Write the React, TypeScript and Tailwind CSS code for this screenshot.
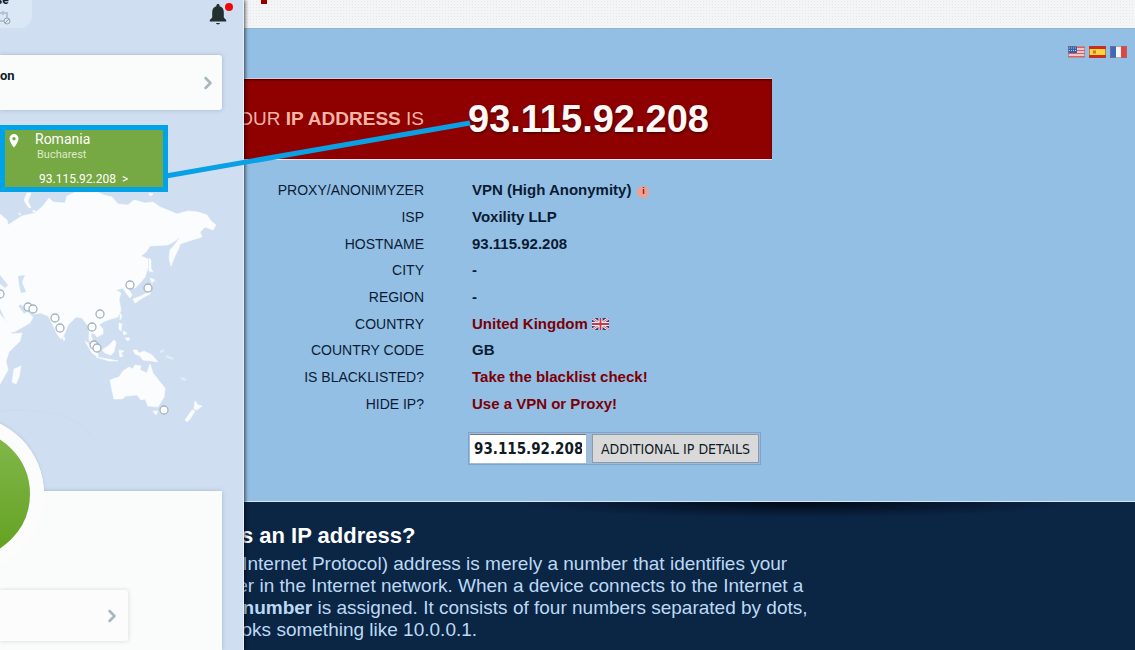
import type { ReactNode } from 'react';
import { ChevronRight } from 'lucide-react';

const PINS = [
  [130, 285],
  [148, 288],
  [0, 294],
  [28, 307],
  [33, 309],
  [55, 318],
  [60, 328],
  [100, 314],
  [92, 327],
  [94, 345],
  [97, 348],
  [164, 410],
];

function FlagUS() {
  return (
    <svg viewBox="0 0 17 12" className="h-3 w-[17px]" role="img" aria-label="English">
      <rect width="17" height="12" fill="#f4e9ea" />
      <path d="M0 1.5h17M0 4.5h17M0 7.5h17M0 10.5h17" stroke="#d9625f" strokeWidth="1.3" />
      <rect width="9" height="7" fill="#2f5fae" />
      <path d="M1 2h7M1 4.500h7" stroke="#b9cdec" strokeDasharray="1 1" />
      <rect x=".5" y=".5" width="16" height="11" fill="none" stroke="#8f6f84" strokeOpacity=".6" />
    </svg>
  );
}

function FlagES() {
  return (
    <svg viewBox="0 0 17 12" className="h-3 w-[17px]" role="img" aria-label="Español">
      <rect width="17" height="12" fill="#d3281f" />
      <rect y="3" width="17" height="6" fill="#fbd63a" />
      <rect x="4" y="4.500" width="3" height="3" fill="#c9783a" />
      <rect x=".5" y=".5" width="16" height="11" fill="none" stroke="#a8402f" strokeOpacity=".6" />
    </svg>
  );
}

function FlagFR() {
  return (
    <svg viewBox="0 0 17 12" className="h-3 w-[17px]" role="img" aria-label="Français">
      <rect width="17" height="12" fill="#f7f7f7" />
      <rect width="6" height="12" fill="#3f69b5" />
      <rect x="11" width="6" height="12" fill="#e2453f" />
      <rect x=".5" y=".5" width="16" height="11" fill="none" stroke="#8c7480" strokeOpacity=".6" />
    </svg>
  );
}

function FlagGB() {
  return (
    <svg viewBox="0 0 17 12" className="ml-1 inline-block h-3 w-[17px] align-[-1px]" role="img" aria-label="GB">
      <rect width="17" height="12" fill="#2d4480" />
      <path d="M0 0l17 12M17 0L0 12" stroke="#f3e7ee" strokeWidth="2.600" />
      <path d="M0 0l17 12M17 0L0 12" stroke="#c8525f" strokeWidth=".8" />
      <path d="M8.500 0v12M0 6h17" stroke="#f6ecf0" strokeWidth="4" />
      <path d="M8.500 0v12M0 6h17" stroke="#c43a48" strokeWidth="1.800" />
    </svg>
  );
}

function WorldMap() {
  return (
    <svg viewBox="0 187 244 250" className="block h-[250px] w-[244px]" aria-hidden="true">
      <g fill="#fbfcfd" stroke="#fbfcfd" strokeWidth=".6" strokeLinejoin="round">
        <path d="M0 214L7 220 8 225 14 221 22 216 35 213 43 206 49 198 53 202 65 203 67 196 80 190 95 191 104 195 112 197 118 204 128 205 134 200 145 203 153 202 160 207 170 211 177 214 188 211 198 212 207 215 211 221 216 225 213 230 205 227 200 232 202 237 192 240 180 244 179 248 175 256 171 266 169 258 170 250 176 243 180 237 172 243 167 245 150 246 146 252 141 256 148 259 148 268 145 277 141 282 135 288 128 288 132 295 130 298 126 293 123 288 116 290 121 293 119 299 121 310 118 317 108 320 103 322 99 325 103 329 103 334 97 337 93 333 91 334 93 343 97 348 95 349 89 340 89 327 82 318 76 317 68 325 64 335 61 339 57 334 53 325 48 316 41 313 33 314 27 311 21 304 18 306 24 314 27 312 33 317 30 323 14 332 11 332 0 308z" />
        <path d="M0 314L5 320 12 334 22 333 20 341 9 352 6 361 8 370 0 384z" />
        <path d="M14 369L21 366 19 377 16 384 12 382z" />
        <path d="M110 380L119 377 123 371 129 367 133 369 135 365 141 366 140 370 147 373 150 364 153 373 160 382 165 388 164 397 158 407 148 406 145 399 141 400 137 395 126 396 122 399 114 399 112 390z" />
        <path d="M153 411L158 411 156 415zM195 401L198 405 202 406 197 410 194 409zM192 410L195 411 190 419 187 422 185 420z" />
        <path d="M133 350L137 350 139 353 144 351 152 355 158 362 152 361 143 360 140 356 135 354z" />
        <path d="M102 350L108 346 114 340 116 342 114 352 111 355 105 353zM85 341L92 346 98 353 98 357 92 353zM96 357L108 359 118 361 109 361z" />
        <path d="M119 350L124 351 121 353 123 356 120 357zM119 323L122 324 121 331 119 329zM123 331L127 333 124 335zM125 338L130 338 128 341zM120 313L122 316 120 320zM62 336L65 338 64 341z" />
        <path d="M149 258L151 260 151 269 153 272 149 271zM150 278L155 280 152 283zM152 284L150 294 144 297 141 299 135 303 133 299 141 296 147 293z" />
        <path d="M27 193L24 200 28 207 31 208 28 201 31 193zM37 212L33 212 33 210zM19 213L21 214 19 215zM149 193L153 194 150 196z" />
      </g>
      <g fill="#d0e0f2">
        <path d="M18 276L25 275 22 282 26 292 21 293 19 285z" />
        <path d="M0 275L8 285 5 288 0 284z" />
        <path d="M91 335L95 334 96 339 92 338z" />
      </g>
      <path d="M160 352l4-2M166 356l7 3M181 378l5 2" stroke="#e4edf7" strokeWidth="2" />
      {PINS.map(([x, y]) => (
        <circle key={`${x}-${y}`} cx={x} cy={y} r="4" fill="#fff" stroke="#a3b3bd" strokeWidth="1.300" />
      ))}
      <path d="M0 411C30 408 62 412 80 425q8 5 12 12" fill="none" stroke="#c8d9ea" strokeOpacity=".5" />
    </svg>
  );
}

function Bell() {
  return (
    <svg viewBox="0 0 18 22" className="h-[22px] w-[18px]" aria-hidden="true">
      <path
        d="M9 1c-1 0-1.600.7-1.600 1.600v.7C4.700 4 3.200 6.200 3.200 9v5.500L.8 17v1.600h16.400V17l-2.400-2.500V9c0-2.800-1.500-5-4.200-5.700v-.7C10.600 1.700 10 1 9 1zM7 20c.3 1 1 1.400 2 1.400s1.700-.4 2-1.400z"
        fill="#22302f"
      />
    </svg>
  );
}

function VpnPanel() {
  return (
    <aside className="absolute inset-y-0 left-0 z-10 flex w-[244px] flex-col overflow-hidden border-r border-[#e6f1fb] bg-[#cfdff1] font-[Roboto,sans-serif] shadow-[1px_0_4px_rgba(0,0,0,0.7)]">
      <header className="flex h-[55px] items-start justify-between pr-2">
        <div className="h-7 w-8 overflow-hidden rounded-br-xl bg-[#dae7f5] text-xs leading-none font-bold text-[#101c28]">
          <div className="-mt-1.5 -ml-1">se</div>
          <svg viewBox="0 0 12 16" className="mt-1 h-4 w-3" aria-hidden="true">
            <path d="M0 3h7v5M0 11h4M3 1v4" fill="none" stroke="#b3c5d5" strokeWidth="2" />
            <circle cx="7" cy="11" r="3" fill="#dae7f5" stroke="#93a5b4" />
            <path d="M5 13l4-4" stroke="#93a5b4" />
          </svg>
        </div>
        <button type="button" aria-label="Notifications" className="relative mt-[3px] pr-2">
          <Bell />
          <span className="absolute top-0 right-0.5 size-2 rounded-full bg-[#f00808]" />
        </button>
      </header>

      <button
        type="button"
        className="mr-[21px] flex h-[55px] shrink-0 items-center justify-between rounded-r-[3px] bg-[#fafbfb] pr-1 text-[13px] font-bold text-[#101c28] shadow-[0_0_4px_rgba(120,140,160,0.5)]"
      >
        <span className="pb-3.5">on</span>
        <ChevronRight className="size-5 text-[#a5b8bf]" strokeWidth={3} />
      </button>

      <div className="z-10 mt-[15px] flex h-[67px] w-[168px] shrink-0 border-[5px] border-[#00a2e8] bg-[#76a843] text-white">
        <svg viewBox="0 0 10 14" className="mt-1 ml-1 h-3.5 w-2.5" aria-hidden="true">
          <path d="M5 0a4.500 4.500 0 0 0-4.500 4.700C.5 8 5 13.500 5 13.500S9.500 8 9.500 4.700A4.500 4.500 0 0 0 5 0zm0 3a1.700 1.700 0 1 1 0 3.400A1.700 1.700 0 0 1 5 3z" fill="#fff" fillRule="evenodd" />
        </svg>
        <div className="ml-4 flex-1">
          <div className="mt-px text-sm leading-4">Romania</div>
          <div className="ml-0.5 text-[11px] leading-4 text-[#dcebc9]">Bucharest</div>
          <a href="#server" className="mt-2 ml-1 block text-xs leading-4 whitespace-pre">
            93.115.92.208&nbsp; &gt;
          </a>
        </div>
      </div>

      <div className="-mt-[5px] h-[304px] shrink-0">
        <WorldMap />
      </div>

      <div className="relative mr-[21px] min-h-[159px] flex-1 rounded-tr-[3px] bg-[#fafbfb] shadow-[0_0_4px_rgba(120,140,160,0.5)]">
        <div className="absolute -top-[75px] -left-[112px] size-[156px] rounded-full bg-[#fbfcfb] shadow-[0_-1px_3px_rgba(120,140,160,0.25)]" />
        <div className="absolute inset-x-0 top-0 h-24 bg-[#fafbfb]" />
        <button
          type="button"
          aria-label="Connection"
          className="absolute -top-[75px] -left-[112px] size-[156px] rounded-full border-[14px] border-[#fbfcfb] bg-linear-to-b from-[#83b94b] to-[#62a01d]"
        />
        <button
          type="button"
          aria-label="Details"
          className="mt-[99px] flex h-[51px] w-32 items-center justify-end rounded-r-[3px] bg-[#fbfcfb] pr-1.5 shadow-[0_0_4px_rgba(120,140,130,0.3)]"
        >
          <ChevronRight className="size-5 text-[#a5b8bf]" strokeWidth={3} />
        </button>
      </div>
    </aside>
  );
}

const link = 'text-[#7a0008]';

const rows: { label: string; value: ReactNode }[] = [
  {
    label: 'PROXY/ANONIMYZER',
    value: (
      <>
        VPN (High Anonymity)
        <span className="ml-1.5 inline-flex size-3 items-center justify-center rounded-full bg-[#f0a090] align-[1px] text-[9px] leading-none text-[#8b1010]">
          i
        </span>
      </>
    ),
  },
  { label: 'ISP', value: 'Voxility LLP' },
  { label: 'HOSTNAME', value: '93.115.92.208' },
  { label: 'CITY', value: '-' },
  { label: 'REGION', value: '-' },
  {
    label: 'COUNTRY',
    value: (
      <a href="#country" className={link}>
        United Kingdom
        <FlagGB />
      </a>
    ),
  },
  { label: 'COUNTRY CODE', value: 'GB' },
  { label: 'IS BLACKLISTED?', value: <a href="#blacklist" className={link}>Take the blacklist check!</a> },
  { label: 'HIDE IP?', value: <a href="#vpn" className={link}>Use a VPN or Proxy!</a> },
];

function IpPage() {
  return (
    <div className="flex min-h-screen flex-col">
      <header className="h-7 bg-[#f4f5f7] bg-[radial-gradient(#e6e7ea_1px,transparent_1px)] bg-size-[3px_3px] pl-[261px]">
        <div className="h-1 w-1.5 bg-[#8f0000]" />
      </header>

      <main className="relative border-t border-b border-t-[#8fb5d6] border-b-[#d8eaf8] bg-[#94bfe5] pt-[49px] pb-9">
        <nav className="absolute top-[17px] right-2 flex gap-1">
          <a href="#en"><FlagUS /></a>
          <a href="#es"><FlagES /></a>
          <a href="#fr"><FlagFR /></a>
        </nav>

        <h1 className="flex h-[82px] w-[772px] items-center border-y border-t-[#e9c6cc] border-b-[#f6e4e8] bg-[#8f0000] font-normal shadow-[inset_0_1px_2px_rgba(0,0,0,0.6)]">
          <span className="w-[424px] text-right text-[19px] text-[#f5b5a6]">
            YOUR <b>IP ADDRESS</b> IS
          </span>
          <b className="pl-11 text-[38px] text-[#fff8f6] [text-shadow:1px_1px_3px_#300]">93.115.92.208</b>
        </h1>

        <table className="mt-[17px] h-60 text-[15px] leading-5 text-[#0a1c33]">
          <tbody>
            {rows.map(row => (
              <tr key={row.label}>
                <th scope="row" className="w-[424px] p-0 text-right text-sm font-normal">
                  {row.label}
                </th>
                <td className="p-0 pl-12 font-bold">{row.value}</td>
              </tr>
            ))}
          </tbody>
        </table>

        <form
          className="mt-[15px] ml-[468px] flex h-[33px] w-fit items-stretch gap-1.5 border border-[#7ea4cb] bg-[#9fbcdb] p-px font-['DejaVu_Sans_Condensed','DejaVu_Sans',sans-serif] text-[#111b26]"
          onSubmit={e => e.preventDefault()}
        >
          <input
            aria-label="IP address"
            defaultValue="93.115.92.208"
            className="w-[116px] border-t border-[#777] bg-white px-1 text-[15px] font-bold"
          />
          <button type="submit" className="border border-[#8f9aa8] bg-[#d9d9d9] px-2 text-sm">
            ADDITIONAL IP DETAILS
          </button>
        </form>
      </main>

      <section className="flex-1 bg-[#0b2545] bg-[radial-gradient(ellipse_at_top,#020a18,transparent_70%)] bg-size-[560px_16px] bg-position-[right_60px_top] bg-no-repeat pt-5 pl-[175px] text-[19px] leading-[22px] text-[#bcd9f4]">
        <h2 className="text-[22px] leading-7 font-bold text-white">What is an IP address?</h2>
        <p className="mt-[3px] whitespace-nowrap">
          The IP (Internet Protocol) address is merely a number that identifies your
          <br />
          computer in the Internet network. When a device connects to the Internet a
          <br />
          <b>unique number</b> is assigned. It consists of four numbers separated by dots,
          <br />
          and it looks something like 10.0.0.1.
        </p>
      </section>
    </div>
  );
}

export default function App() {
  return (
    <div className="relative overflow-hidden font-['Liberation_Sans',Arial,sans-serif]">
      <IpPage />
      <VpnPanel />
      {/* Connects the server card with the detected address */}
      <svg viewBox="0 0 310 62" className="pointer-events-none absolute top-[119px] left-[165px] z-20 h-[62px] w-[310px]" aria-hidden="true">
        <path d="M1 57L305 4" stroke="#0aa0e6" strokeWidth="5" />
      </svg>
    </div>
  );
}
